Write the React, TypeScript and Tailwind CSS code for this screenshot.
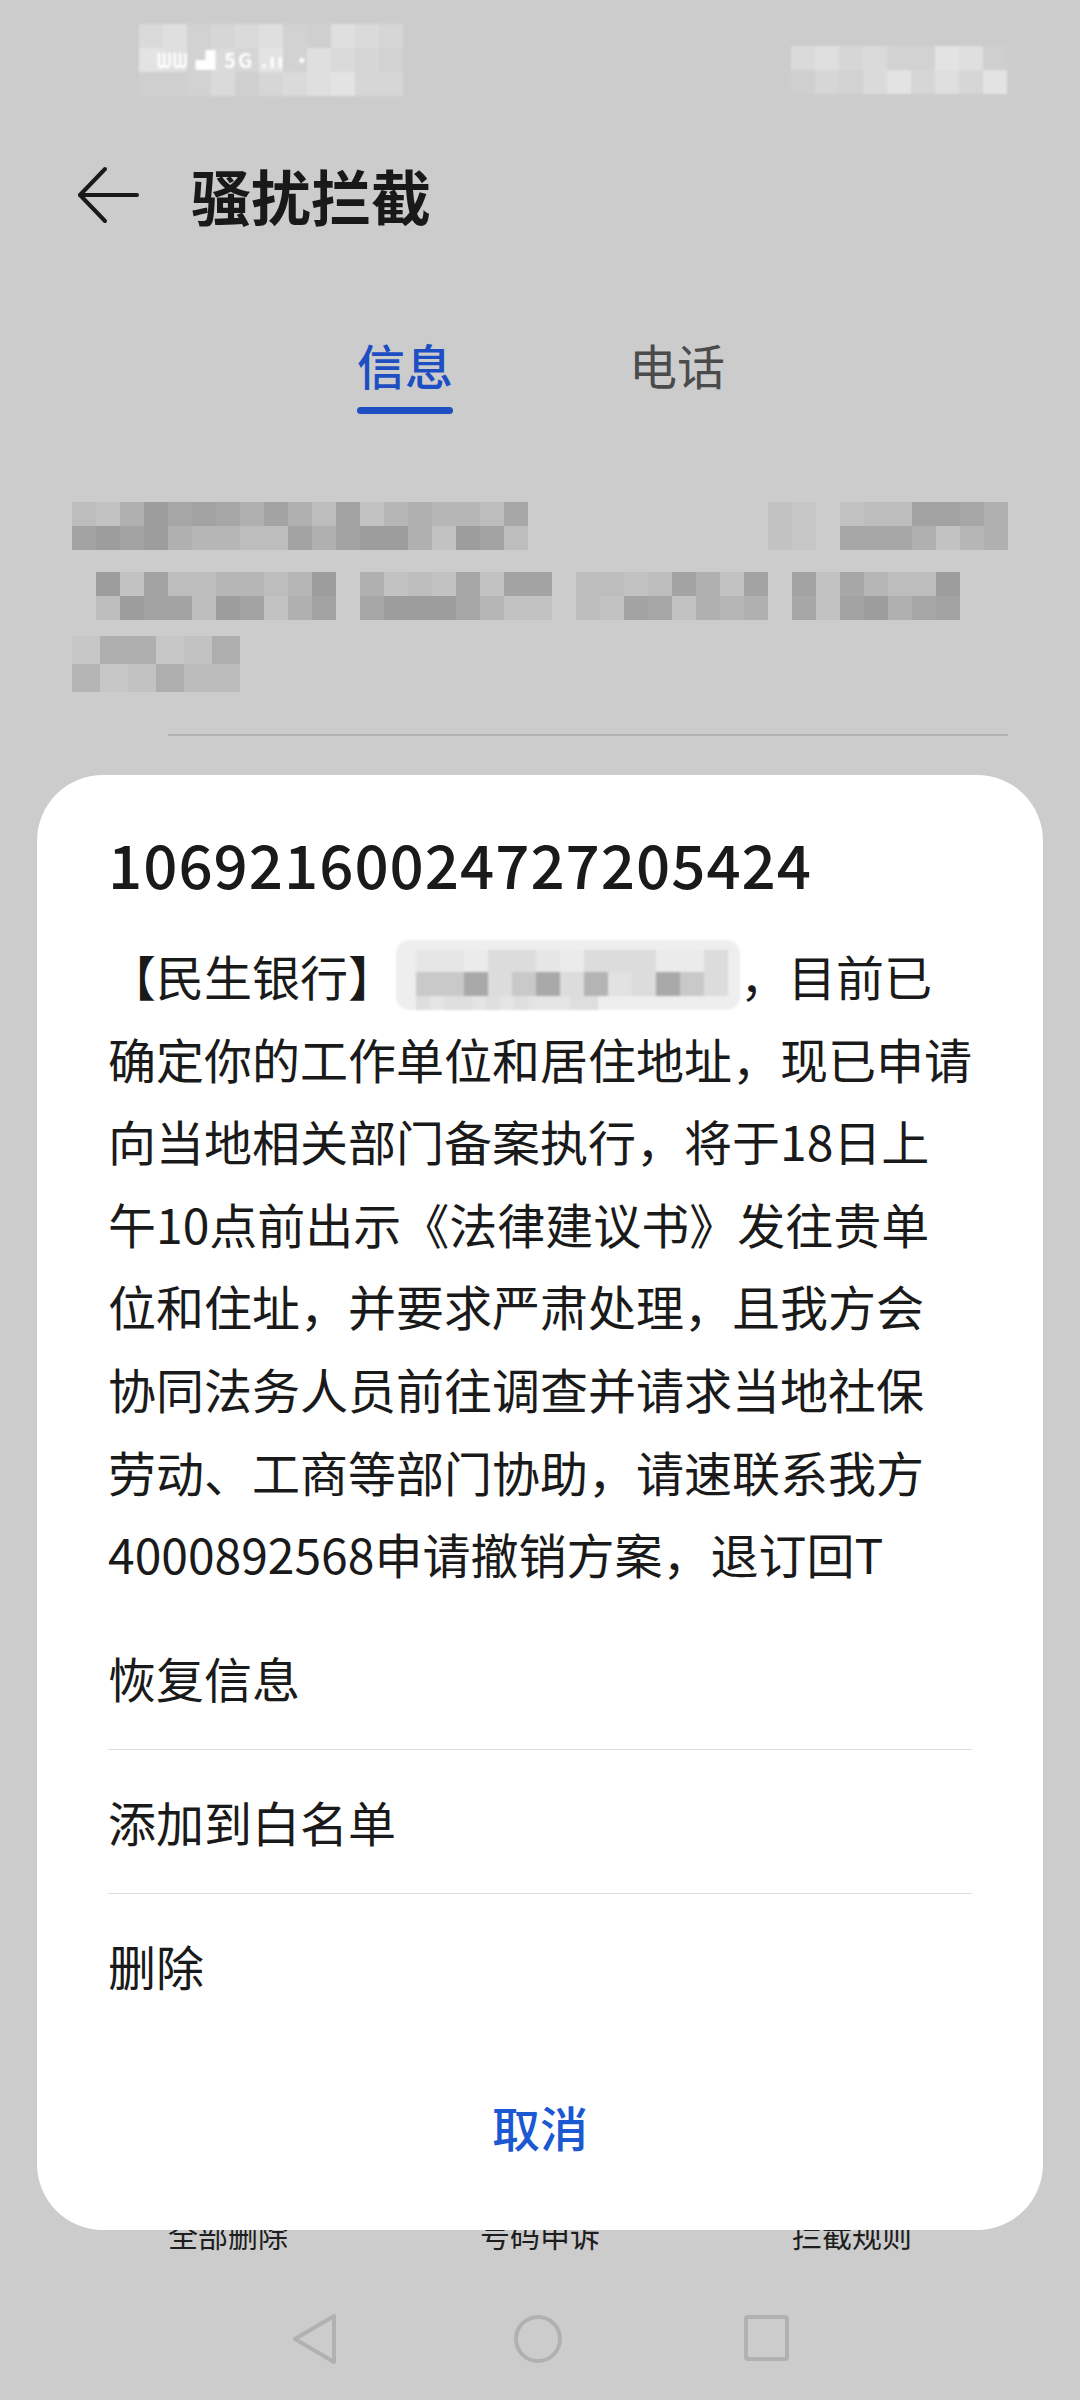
import React from "react";

const FONT = "font-['Noto_Sans_CJK_SC','Noto_Sans',sans-serif]";
const PHONE = "10692160024727205424";

function Mosaic({
  cols,
  rows,
  cell = 24,
  colors,
  seed,
  className = "",
}: {
  cols: number;
  rows: number;
  cell?: number;
  colors: string[];
  seed: number;
  className?: string;
}) {
  let s = seed;
  const next = () => {
    s = (s * 9301 + 49297) % 233280;
    return s / 233280;
  };
  const cells = [];
  for (let i = 0; i < cols * rows; i++) {
    cells.push(
      <div
        key={i}
        style={{ width: cell, height: cell, background: colors[Math.floor(next() * colors.length)] }}
      />
    );
  }
  return (
    <div
      className={"grid shrink-0 " + className}
      style={{ gridTemplateColumns: `repeat(${cols}, ${cell}px)` }}
    >
      {cells}
    </div>
  );
}

const DARK = ["#9d9d9d", "#a7a7a7", "#b0b0b0", "#b6b6b6", "#bdbdbd", "#a3a3a3", "#c2c2c2"];
const MID = ["#b4b4b4", "#bcbcbc", "#c2c2c2", "#aeaeae", "#c6c6c6"];
const LIGHT = ["#d2d2d2", "#d6d6d6", "#dadada", "#dfdfdf", "#e3e3e3", "#cfcfcf"];

function BackArrow() {
  return (
    <svg width="62" height="58" viewBox="0 0 62 58" fill="none" stroke="#1a1a1a" strokeWidth="4" strokeLinecap="round" strokeLinejoin="round">
      <path d="M3 29 H60" />
      <path d="M28 3 L3 29 L28 55" />
    </svg>
  );
}

const BODY_LINES = [
  "确定你的工作单位和居住地址，现已申请",
  "向当地相关部门备案执行，将于18日上",
  "午10点前出示《法律建议书》发往贵单",
  "位和住址，并要求严肃处理，且我方会",
  "协同法务人员前往调查并请求当地社保",
  "劳动、工商等部门协助，请速联系我方",
  "4000892568申请撤销方案，退订回T",
];

export default function App() {
  return (
    <div className={"relative w-[1080px] h-[2400px] overflow-hidden bg-[#cccccc] flex flex-col " + FONT}>
      {/* Status bar (blurred) */}
      <div className="h-[130px] flex justify-between pl-[139px] pr-[73px] pt-[24px] blur-[1px]">
        <div className="relative">
          <Mosaic cols={11} rows={3} colors={LIGHT} seed={7} />
          <span className="absolute left-[18px] top-[24px] text-[20px] font-bold leading-[24px] text-white tracking-[2px]">
            ᗯᗯ ▟ 5G .ıı ·
          </span>
        </div>
        <div className="pt-[22px]">
          <Mosaic cols={9} rows={2} colors={LIGHT} seed={31} />
        </div>
      </div>

      {/* Header */}
      <div className="h-[130px] flex items-center pl-[77px]">
        <BackArrow />
        <span className="ml-[52px] text-[60px] font-bold leading-[70px] text-[#191919]">骚扰拦截</span>
      </div>

      {/* Tabs */}
      <div className="flex justify-center gap-[176px] pt-[74px] pl-[2px]">
        <div className="flex flex-col items-center">
          <span className="text-[48px] font-medium leading-[60px] text-[#1d4fc2]">信息</span>
          <div className="mt-[13px] h-[7px] w-[96px] rounded-full bg-[#1d4fc2]" />
        </div>
        <div className="flex flex-col items-center">
          <span className="text-[48px] leading-[60px] text-[#4b4b4b]">电话</span>
          <div className="mt-[13px] h-[7px] w-[96px]" />
        </div>
      </div>

      {/* Blurred list item */}
      <div className="mt-[88px] pl-[72px] flex flex-col gap-[22px] blur-[0.6px]">
        <div className="flex">
          <Mosaic cols={19} rows={2} colors={DARK} seed={11} />
          <Mosaic cols={2} rows={2} colors={MID} seed={5} className="ml-[240px]" />
          <Mosaic cols={7} rows={2} colors={DARK} seed={19} className="ml-[24px]" />
        </div>
        <div className="flex pl-[24px]">
          <Mosaic cols={10} rows={2} colors={DARK} seed={23} />
          <Mosaic cols={8} rows={2} colors={DARK} seed={29} className="ml-[24px]" />
          <Mosaic cols={8} rows={2} colors={DARK} seed={37} className="ml-[24px]" />
          <Mosaic cols={7} rows={2} colors={DARK} seed={41} className="ml-[24px]" />
        </div>
        <div className="flex -mt-[6px]">
          <Mosaic cols={6} rows={2} cell={28} colors={MID} seed={43} />
        </div>
      </div>
      <div className="mt-[42px] ml-[168px] w-[840px] h-[2px] bg-[#b3b3b3]" />

      {/* Bottom toolbar (behind dialog) */}
      <div className="mt-auto grid grid-cols-3 px-[72px] text-[30px] leading-[40px] text-[#1e1e1e] text-center">
        <span>全部删除</span>
        <span>号码申诉</span>
        <span>拦截规则</span>
      </div>

      {/* Navigation bar */}
      <div className="h-[146px] pt-[61px] flex items-start justify-center">
        <svg width="48" height="52" viewBox="0 0 48 52" fill="none" stroke="#b1b1b1" strokeWidth="4" strokeLinejoin="round" className="mr-[175px] -mt-[2px]">
          <path d="M4 26 L43 3 L43 49 Z" />
        </svg>
        <div className="w-[48px] h-[48px] rounded-full border-[4px] border-[#b1b1b1]" />
        <div className="ml-[182px] w-[45px] h-[46px] rounded-[4px] border-[4px] border-[#b1b1b1]" />
      </div>

      {/* Dialog */}
      <div className="absolute left-[37px] top-[775px] w-[1006px] h-[1455px] rounded-[66px] bg-white px-[71px] pt-[48px] flex flex-col">
        <div className="text-[60px] font-medium leading-[80px] tracking-[1px] text-[#1a1a1a]">{PHONE}</div>
        <div className="mt-[31px] text-[48px] leading-[82.6px] text-[#1a1a1a]">
          <div className="whitespace-nowrap flex items-center">
            <span>【民生银行】</span>
            <span className="relative inline-block w-[344px] h-[70px] blur-[1.2px]">
              <span className="absolute inset-0 rounded-[14px] bg-[#eeeeee]" />
              <span className="absolute left-[20px] top-[10px] flex">
                <Mosaic cols={13} rows={1} cell={24} colors={["#e6e6e6", "#dcdcdc", "#ebebeb"]} seed={3} />
              </span>
              <span className="absolute left-[20px] top-[32px] flex">
                <Mosaic cols={13} rows={1} cell={24} colors={["#a9a9a9", "#dcdcdc", "#b4b4b4", "#e2e2e2", "#c9c9c9"]} seed={17} />
              </span>
              <span className="absolute left-[20px] top-[56px] flex">
                <Mosaic cols={13} rows={1} cell={14} colors={["#e4e4e4", "#dedede"]} seed={9} />
              </span>
            </span>
            <span>，目前已</span>
          </div>
          {BODY_LINES.map((l) => (
            <div key={l} className="whitespace-nowrap">
              {l}
            </div>
          ))}
        </div>

        <div className="mt-[11px] flex flex-col text-[48px] text-[#1a1a1a]">
          <div className="h-[144px] flex items-center border-b border-[#dcdcdc]">恢复信息</div>
          <div className="h-[144px] flex items-center border-b border-[#dcdcdc]">添加到白名单</div>
          <div className="h-[143px] flex items-center">删除</div>
        </div>

        <div className="h-[178px] flex items-center justify-center text-[48px] font-medium text-[#1b58d2]">
          取消
        </div>
      </div>
    </div>
  );
}
